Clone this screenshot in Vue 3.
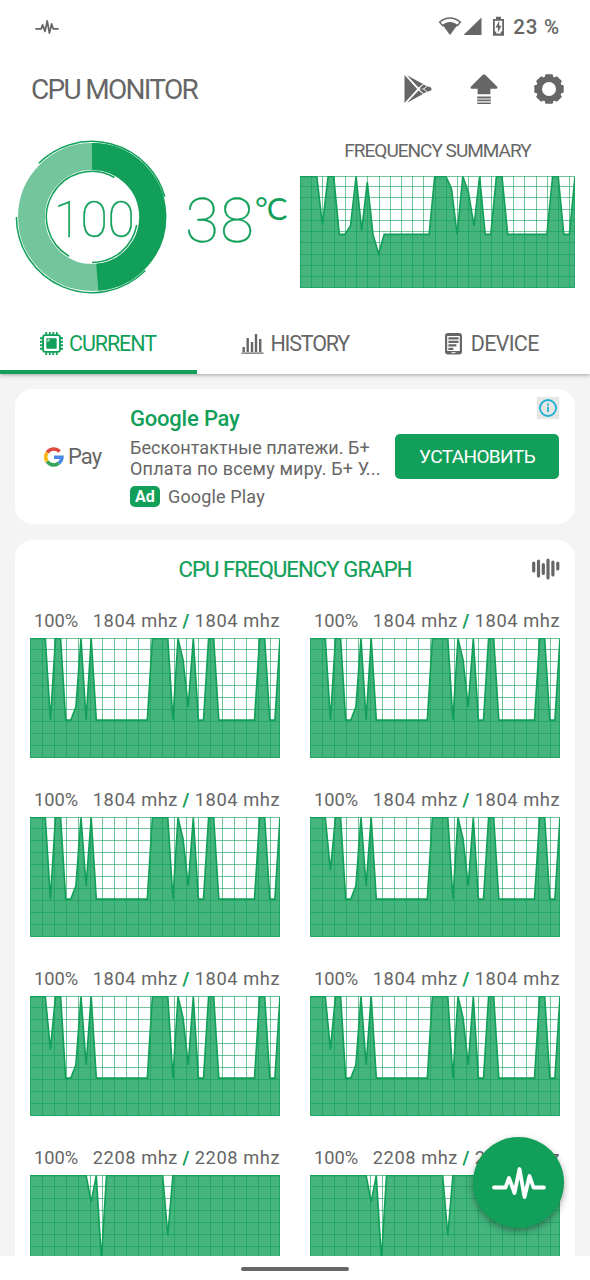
<template>
  <div class="screen">
    <header class="top">
      <div class="status-bar">
        <svg class="status-pulse" viewBox="0 0 54 32"><path :d="pulsePath" /></svg>
        <div class="status-right">
          <svg class="status-icons" width="70" height="22" viewBox="0 0 70 22">
            <path d="M1.6 6Q12 -2 22.4 6L19.5 9.6Q12 3.8 4.5 9.6Z" class="wifi-band" />
            <path d="M4.6 9Q12 3.4 19.4 9L12 19Z" />
            <path d="M43.5 1.5V19H25.5Z" />
            <path d="M58 .8h5v2.2h3v16.7H55V3h3Z" />
            <path d="M56.8 4.8h7.4v10.8h-1.4v2h-4.6v-2h-1.4Z" class="cut" />
            <path d="M61.2 4.8 57.6 11.6h2.3v5l3.6-6.9h-2.3Z" />
          </svg>
          <span class="battery">23 %</span>
        </div>
      </div>

      <div class="title-bar">
        <h1>CPU MONITOR</h1>
        <div class="actions">
          <svg width="28" height="30" viewBox="0 0 28 30">
            <path d="M.5 1v28L13.2 15Z" />
            <path d="M3 1.2 19 9.9 14.5 13.6Z" />
            <path d="M3 28.8 19 20.1 14.5 16.4Z" />
            <path d="M19.6 10.4 22.6 12 19.6 14.4 16.6 15 15.6 14.2ZM19.6 19.6 22.6 18 19.6 15.6 16.6 15 15.6 15.8Z" />
            <path d="M23.4 12.2 26.5 13.2Q28.7 15 26.5 16.8L23.4 17.8 20.2 15Z" />
          </svg>
          <svg width="28" height="30" viewBox="0 0 28 30">
            <path d="M12.8.8Q14 0 15.2.8L27 12.5Q28.3 14.3 26 14.8H20.4V20.2H7.6V14.8H2Q-.3 14.3 1 12.5Z" />
            <path d="M7.2 22.4h13.6v2H7.2ZM7.2 25.6h13.6v1.6H7.2ZM7.2 28.4h13.6V30H7.2Z" />
          </svg>
          <svg width="30" height="30" viewBox="0 0 30 30">
            <circle cx="15" cy="15" r="10" class="gear-ring" />
            <rect v-for="a in 8" :key="a" x="11" y=".3" width="8" height="5" rx="1.2" :transform="`rotate(${a * 45} 15 15)`" />
          </svg>
        </div>
      </div>

      <div class="overview">
        <div class="gauge">
          <svg width="154" height="156" viewBox="-77 -78 154 156">
            <circle r="60.5" class="gauge-track" />
            <path d="M0 -60.5A60.5 60.5 0 0 1 5.3 60.3" class="gauge-value" />
            <path d="M-53.2 -53.7A75.6 75.6 0 0 1 72.8 -20.3M-75.6 0A75.6 75.6 0 0 0 53.4 53.5" class="gauge-arc" />
            <path d="M-22.8 39.3A45.4 45.4 0 0 1 22.4 -39.5M0 45.4A45.4 45.4 0 0 0 44.7 8" class="gauge-arc" />
          </svg>
          <span class="gauge-number">100</span>
        </div>
        <div class="temperature">38<span class="unit">°C</span></div>
        <div class="summary">
          <h2>FREQUENCY SUMMARY</h2>
          <svg class="summary-chart" width="275" height="112" viewBox="0 0 275 112">
            <path :d="areaPath(summary, 275, 112)" class="area" />
            <path :d="gridPath(275, 112, 11.22)" class="grid-lines" />
            <path :d="linePath(summary, 275, 112)" class="line" />
          </svg>
        </div>
      </div>

      <nav class="tabs">
        <div class="tab active">
          <svg width="23" height="23" viewBox="0 0 24 24">
            <rect x="3.2" y="3.2" width="17.6" height="17.6" rx="2.2" class="stroked" />
            <rect x="6.6" y="6.6" width="10.8" height="10.8" rx=".8" />
            <path d="M6.5 0v3M10.2 0v3M13.8 0v3M17.5 0v3M6.5 21v3M10.2 21v3M13.8 21v3M17.5 21v3M0 6.5h3M0 10.2h3M0 13.8h3M0 17.5h3M21 6.5h3M21 10.2h3M21 13.8h3M21 17.5h3" class="stroked" />
            <path d="M8.3 10.2V8.3h2" class="notch" />
          </svg>
          <span>CURRENT</span>
        </div>
        <div class="tab history">
          <svg width="24" height="24" viewBox="0 0 24 24">
            <path d="M1.5 15h2.4v5H1.5ZM5.5 6h2.4v14H5.5ZM9.8 10h2.4v10H9.8ZM13.8 2h2.4v18h-2.4ZM18 7h2.4v13H18ZM.5 20.4h22v1.3H.5Z" />
          </svg>
          <span>HISTORY</span>
        </div>
        <div class="tab device">
          <svg width="18" height="24" viewBox="0 0 18 24">
            <rect x="0" y="1" width="17" height="21.5" rx="3" />
            <rect x="2.2" y="4" width="12.6" height="15" class="cut" />
            <path d="M3.4 5.3h10.2v2.3H3.4ZM3.4 8.8h10.2v2.3H3.4ZM3.4 12.3h8v2.3h-8ZM3.4 15.8h5v2.2h-5Z" />
            <path d="M6.5 20.2h4v1h-4Z" class="cut" />
          </svg>
          <span>DEVICE</span>
        </div>
      </nav>
    </header>

    <main class="content">
      <section class="card ad">
        <div class="pay-logo">
          <svg width="20" height="20" viewBox="0 0 20 20">
            <path d="M3.2 5.5A8 8 0 0 1 15.6 4.5" stroke="#e04a3f" />
            <path d="M3.2 5.5A8 8 0 0 0 3.2 14.5" stroke="#f5b915" />
            <path d="M3.2 14.5A8 8 0 0 0 14.8 16.2" stroke="#35a457" />
            <path d="M14.8 16.2A8 8 0 0 0 17.9 10.2H10" stroke="#4a86e8" />
          </svg>
          <span>Pay</span>
        </div>
        <div class="ad-body">
          <h3>Google Pay</h3>
          <p>Бесконтактные платежи. Б+</p>
          <p class="second">Оплата по всему миру. Б+ У...</p>
          <div class="ad-source"><b>Ad</b><span>Google Play</span></div>
        </div>
        <div class="ad-side">
          <svg width="22" height="22" viewBox="0 0 22 22" class="info">
            <circle cx="11" cy="11" r="8" />
            <path d="M11 9.8v5.2M11 6.6v2" />
          </svg>
          <button>УСТАНОВИТЬ</button>
        </div>
      </section>

      <section class="card cores">
        <div class="cores-head">
          <h2>CPU FREQUENCY GRAPH</h2>
          <svg width="28" height="22" viewBox="0 0 28 22">
            <path d="M1.7 5v8M6.5 3v15M11.3 6.5v9M16 2v18M20.9 4v13M25.8 5v6" />
          </svg>
        </div>
        <div class="core-grid">
          <div v-for="(core, i) in cores" :key="i" class="core">
            <div class="core-label">
              <span class="load">100%</span>
              <span class="freq">{{ core.mhz }} mhz<i>/</i>{{ core.mhz }} mhz</span>
            </div>
            <svg width="250" height="120" viewBox="0 0 250 120">
              <path :d="areaPath(core.points, 250, 120)" class="area" />
              <path :d="gridPath(250, 120, 12)" class="grid-lines" />
              <path :d="linePath(core.points, 250, 120)" class="line" />
            </svg>
          </div>
        </div>
      </section>
    </main>

    <div class="fab">
      <svg width="54" height="32" viewBox="0 0 54 32"><path :d="pulsePath" /></svg>
    </div>
    <footer class="nav-bar"><div class="handle"></div></footer>
  </div>
</template>

<script setup>
const pulsePath = 'M2 20.5H13.5L17 11 22.5 26 27.5 2 32.5 30 37.5 9 41.5 20.5H52'

// each value is the distance from the top of the chart, 0..1
const rep = (value, count) => Array(count).fill(value)
const LOW = 0.68

const littleCore = (dipA, dipB) => [
  ...rep(0, 4), dipA, 0, 0, LOW, LOW, 0.57, 0, dipB, 0,
  ...rep(LOW, 11), ...rep(0, 4), LOW, 0, 0.18, 0.57, 0, LOW, LOW, 0, 0,
  ...rep(LOW, 8), 0, 0, LOW, LOW, 0
]

const bigCore = [...rep(0, 12), 0.22, 0, 0.7, ...rep(0, 12), 0.5, ...rep(0, 22)]

const summary = [
  ...rep(0, 4), 0.43, 0, 0, 0.517, 0.517, 0.44, 0, 0.48, 0.05, 0.517, 0.69,
  ...rep(0.517, 9), 0, 0, 0, 0.11, 0.517, 0, 0.14, 0.44, 0, 0.517, 0.517, 0, 0,
  ...rep(0.517, 8), 0, 0, 0.517, 0.517, 0
]

const cores = [
  { mhz: 1804, points: littleCore(LOW, LOW) },
  { mhz: 1804, points: littleCore(LOW, LOW) },
  { mhz: 1804, points: littleCore(LOW, 0.57) },
  { mhz: 1804, points: littleCore(0.44, 0.57) },
  { mhz: 1804, points: littleCore(0.44, 0.57) },
  { mhz: 1804, points: littleCore(0.44, 0.57) },
  { mhz: 2208, points: bigCore },
  { mhz: 2208, points: bigCore }
]

const linePath = (points, w, h) => {
  const step = w / (points.length - 1)
  return points.map((p, i) => `${i ? 'L' : 'M'}${(i * step).toFixed(1)} ${(p * h + 0.5).toFixed(1)}`).join('')
}

const areaPath = (points, w, h) => `${linePath(points, w, h)}V${h}H0Z`

const gridPath = (w, h, cell) => {
  let d = `M.5 .5H${w - 0.5}V${h - 0.5}H.5Z`
  for (let x = cell; x < w - 2; x += cell) d += `M${Math.round(x) + 0.5} 0V${h}`
  for (let y = cell; y < h - 2; y += cell) d += `M0 ${Math.round(y) - 0.5}H${w}`
  return d
}
</script>

<style>
body {
  background: #fff;
}
</style>

<style scoped>
.screen {
  position: relative;
  display: flex;
  flex-direction: column;
  width: 590px;
  height: 1280px;
  overflow: hidden;
  background: #fff;
  color: #666;
  font-family: Roboto, "Noto Sans", sans-serif;
}

svg {
  display: block;
  flex: none;
  fill: #666;
}

h1, h2, h3, p {
  margin: 0;
  font-weight: 400;
  white-space: nowrap;
}

.cut {
  fill: #fff;
}

.top {
  position: relative;
  z-index: 1;
  height: 374px;
  flex: none;
  background: #fff;
  box-shadow: 0 1px 4px rgba(0, 0, 0, 0.35);
}

.status-bar {
  display: flex;
  align-items: center;
  justify-content: space-between;
  height: 54px;
  padding: 0 30px 0 35px;
}

.status-pulse {
  width: 24px;
  height: 14px;
}

.status-pulse path,
.fab path {
  fill: none;
  stroke: #666;
  stroke-width: 4;
  stroke-linecap: round;
  stroke-linejoin: round;
}

.status-right {
  display: flex;
  align-items: center;
  gap: 5px;
}

.wifi-band {
  fill: none;
  stroke: #666;
  stroke-width: 1.4;
}

.battery {
  font-size: 20.5px;
  font-weight: 500;
  letter-spacing: 0.8px;
}

.title-bar {
  display: flex;
  align-items: center;
  justify-content: space-between;
  height: 70px;
  padding: 0 25px 0 31px;
}

h1 {
  font-size: 28px;
  letter-spacing: -1.7px;
}

.actions {
  display: flex;
  gap: 38px;
}

.actions svg:last-child {
  margin-right: 1px;
  margin-left: -2px;
}

.gear-ring {
  fill: none;
  stroke: #666;
  stroke-width: 6;
}

.overview {
  display: flex;
  height: 188px;
}

.gauge {
  position: relative;
  margin: 15px 0 0 15px;
  width: 154px;
  flex: none;
}

.gauge-number {
  position: absolute;
  left: 0;
  top: 51px;
  width: 158px;
  text-align: center;
  font: 100 50px/60px Roboto, sans-serif;
  letter-spacing: -0.5px;
  color: #119f59;
  -webkit-text-stroke: 0.4px #119f59;
}

.gauge-track {
  fill: none;
  stroke: #73c69c;
  stroke-width: 27;
}

.gauge-value {
  fill: none;
  stroke: #119f59;
  stroke-width: 27;
}

.gauge-arc {
  fill: none;
  stroke: #119f59;
  stroke-width: 1.5;
}

.temperature {
  display: flex;
  width: 115px;
  flex: none;
  margin: 60px 0 0 16px;
  font: 100 62px/74px Roboto, sans-serif;
  letter-spacing: 1px;
  color: #119f59;
  -webkit-text-stroke: 0.3px #119f59;
}

.unit {
  margin: 6px 0 0;
  font: 400 31px/36px Lato, sans-serif;
  letter-spacing: -1px;
  -webkit-text-stroke: 0;
}

.summary {
  width: 275px;
  margin-top: 15px;
}

.summary h2 {
  font-size: 19px;
  line-height: 24px;
  text-align: center;
  letter-spacing: -1px;
}

.summary-chart {
  margin-top: 13px;
}

.area {
  fill: #119f59;
  fill-opacity: 0.78;
}

.grid-lines {
  fill: none;
  stroke: #119f59;
  stroke-width: 1;
  stroke-opacity: 0.6;
}

.line {
  fill: none;
  stroke: #119f59;
  stroke-width: 1.6;
}

.tabs {
  display: flex;
  height: 62px;
}

.tab {
  display: flex;
  flex: 0 0 196.5px;
  align-items: center;
  justify-content: center;
  gap: 6px;
  box-sizing: border-box;
  border-bottom: 4px solid transparent;
  padding-top: 5px;
  font-size: 21.5px;
  letter-spacing: -1.1px;
}

.tab.active {
  flex-basis: 197px;
  padding-right: 1px;
  color: #119f59;
  border-color: #119f59;
}

.tab.active svg {
  fill: #119f59;
}

.tab.history {
  gap: 5px;
  letter-spacing: -1.2px;
}

.tab.device {
  gap: 8px;
  letter-spacing: -0.7px;
}

.stroked {
  fill: none;
  stroke: #119f59;
  stroke-width: 1.9;
}

.notch {
  fill: none;
  stroke: #fff;
  stroke-width: 1;
}

.content {
  display: flex;
  flex-direction: column;
  gap: 16px;
  height: 882px;
  box-sizing: border-box;
  padding: 15px 15px 0;
  overflow: hidden;
  background: #f4f4f4;
}

.card {
  flex: none;
  box-sizing: border-box;
  border-radius: 18px;
  background: #fff;
}

.ad {
  display: flex;
  height: 135px;
  padding: 0 15px;
}

.pay-logo {
  display: flex;
  width: 100px;
  box-sizing: border-box;
  padding-left: 14px;
  gap: 4px;
  align-items: center;
  font-size: 22px;
  letter-spacing: -0.9px;
}

.pay-logo path {
  fill: none;
  stroke-width: 3.6;
}

.ad-body {
  width: 265px;
  padding-top: 16px;
}

.ad-body h3 {
  margin-bottom: 4px;
  font-size: 22px;
  line-height: 28px;
  font-weight: 500;
  letter-spacing: -0.2px;
  color: #119f59;
}

.ad-body p {
  font-size: 18px;
  line-height: 21px;
  letter-spacing: 0.05px;
}

.ad-body .second {
  letter-spacing: 0.2px;
}

.ad-source {
  display: flex;
  align-items: center;
  gap: 8px;
  margin-top: 7px;
  font-size: 18px;
  line-height: 21px;
  letter-spacing: 0.15px;
}

.ad-source b {
  width: 30px;
  border-radius: 5px;
  background: #119f59;
  color: #fff;
  font-size: 16px;
  text-align: center;
}

.ad-side {
  display: flex;
  flex-direction: column;
  align-items: flex-end;
  padding-top: 8px;
}

.info {
  background: #e6e6e6;
}

.info circle,
.info path {
  fill: none;
  stroke: #1fb0d0;
  stroke-width: 1.8;
}

.ad button {
  width: 164px;
  height: 45px;
  margin-top: 15px;
  padding: 0;
  border: 0;
  border-radius: 5px;
  background: #119f59;
  color: #fff;
  font: 400 19px Roboto, sans-serif;
  letter-spacing: -0.6px;
}

.cores {
  height: 760px;
  padding: 0 15px;
}

.cores-head {
  position: relative;
  display: flex;
  align-items: center;
  justify-content: center;
  height: 58px;
}

.cores-head h2 {
  font-size: 22px;
  letter-spacing: -0.85px;
  color: #119f59;
  -webkit-text-stroke: 0.2px #119f59;
}

.cores-head svg {
  position: absolute;
  right: 0;
  top: 18px;
}

.cores-head path {
  stroke: #666;
  stroke-width: 3.2;
  stroke-linecap: round;
}

.core-grid {
  display: grid;
  grid-template-columns: 250px 250px;
  column-gap: 30px;
  row-gap: 18px;
}

.core {
  height: 161px;
}

.core-label {
  display: flex;
  justify-content: space-between;
  padding: 10px 0 5px 4px;
  font-size: 18.3px;
  line-height: 25px;
}

.freq {
  letter-spacing: 0.55px;
}

.freq i {
  padding: 0 5px 0 4.5px;
  font-style: normal;
  font-weight: 700;
  color: #119f59;
}

.fab {
  position: absolute;
  z-index: 2;
  left: 473px;
  top: 1137px;
  display: flex;
  align-items: center;
  justify-content: center;
  width: 91px;
  height: 91px;
  border-radius: 50%;
  background: #119f59;
  box-shadow: 0 3px 7px rgba(0, 0, 0, 0.35);
}

.fab path {
  stroke: #fff;
  stroke-width: 3.8;
}

.nav-bar {
  display: flex;
  justify-content: center;
  height: 24px;
  background: #fff;
}

.handle {
  width: 108px;
  height: 4px;
  margin-top: 11px;
  border-radius: 2px;
  background: #666;
}
</style>
